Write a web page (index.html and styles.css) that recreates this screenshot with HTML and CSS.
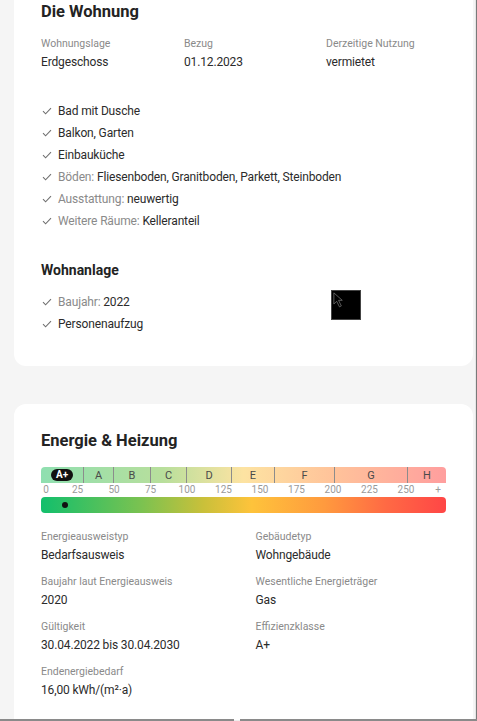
FILE: index.html
```html
<!DOCTYPE html>
<html lang="de">
<head>
<meta charset="utf-8">
<title>Die Wohnung</title>
<link rel="stylesheet" href="styles.css">
</head>
<body>
<div class="page">
  <section class="card card-top">
    <h2 class="title">Die Wohnung</h2>
    <div class="facts three">
      <div class="fact"><div class="label">Wohnungslage</div><div class="value">Erdgeschoss</div></div>
      <div class="fact"><div class="label">Bezug</div><div class="value">01.12.2023</div></div>
      <div class="fact"><div class="label">Derzeitige Nutzung</div><div class="value">vermietet</div></div>
    </div>
    <ul class="checks first">
      <li><svg class="tick" viewBox="0 0 10 8"><path d="M1 4.2 L3.6 6.8 L9 1.2"/></svg><span>Bad mit Dusche</span></li>
      <li><svg class="tick" viewBox="0 0 10 8"><path d="M1 4.2 L3.6 6.8 L9 1.2"/></svg><span>Balkon, Garten</span></li>
      <li><svg class="tick" viewBox="0 0 10 8"><path d="M1 4.2 L3.6 6.8 L9 1.2"/></svg><span>Einbauküche</span></li>
      <li><svg class="tick" viewBox="0 0 10 8"><path d="M1 4.2 L3.6 6.8 L9 1.2"/></svg><span><span class="muted">Böden:</span> Fliesenboden, Granitboden, Parkett, Steinboden</span></li>
      <li><svg class="tick" viewBox="0 0 10 8"><path d="M1 4.2 L3.6 6.8 L9 1.2"/></svg><span><span class="muted">Ausstattung:</span> neuwertig</span></li>
      <li><svg class="tick" viewBox="0 0 10 8"><path d="M1 4.2 L3.6 6.8 L9 1.2"/></svg><span><span class="muted">Weitere Räume:</span> Kelleranteil</span></li>
    </ul>
    <h3 class="subtitle">Wohnanlage</h3>
    <div class="anlage">
      <ul class="checks">
        <li><svg class="tick" viewBox="0 0 10 8"><path d="M1 4.2 L3.6 6.8 L9 1.2"/></svg><span><span class="muted">Baujahr:</span> 2022</span></li>
        <li><svg class="tick" viewBox="0 0 10 8"><path d="M1 4.2 L3.6 6.8 L9 1.2"/></svg><span>Personenaufzug</span></li>
      </ul>
      <div class="cursor-box"><svg viewBox="0 0 30 30" width="28" height="28"><path d="M2 2 L2 14 L5 11 L8 17 L10 16 L7 10 L11 10 Z" fill="none" stroke="#777" stroke-width="0.8"/></svg></div>
    </div>
  </section>

  <section class="card card-energy">
    <h2 class="title">Energie &amp; Heizung</h2>
    <div class="scale">
      <div class="classes">
        <div class="cls" style="width:43px"><span class="badge">A+</span></div>
        <div class="cls" style="width:30px">A</div>
        <div class="cls" style="width:37px">B</div>
        <div class="cls" style="width:36px">C</div>
        <div class="cls" style="width:45px">D</div>
        <div class="cls" style="width:43px">E</div>
        <div class="cls" style="width:60px">F</div>
        <div class="cls" style="width:73px">G</div>
        <div class="cls last">H</div>
      </div>
      <div class="ticks">
        <span class="num" style="left:5px">0</span>
        <span class="num" style="left:36.5px">25</span>
        <span class="num" style="left:73px">50</span>
        <span class="num" style="left:109.5px">75</span>
        <span class="num" style="left:146px">100</span>
        <span class="num" style="left:182.5px">125</span>
        <span class="num" style="left:219px">150</span>
        <span class="num" style="left:255.5px">175</span>
        <span class="num" style="left:292px">200</span>
        <span class="num" style="left:328.5px">225</span>
        <span class="num" style="left:365px">250</span>
        <span class="num" style="left:397px">+</span>
      </div>
      <div class="bar"><span class="dot" style="left:23.5px"></span></div>
    </div>
    <div class="facts two">
      <div class="fact"><div class="label">Energieausweistyp</div><div class="value">Bedarfsausweis</div></div>
      <div class="fact"><div class="label">Gebäudetyp</div><div class="value">Wohngebäude</div></div>
      <div class="fact"><div class="label">Baujahr laut Energieausweis</div><div class="value">2020</div></div>
      <div class="fact"><div class="label">Wesentliche Energieträger</div><div class="value">Gas</div></div>
      <div class="fact"><div class="label">Gültigkeit</div><div class="value">30.04.2022 bis 30.04.2030</div></div>
      <div class="fact"><div class="label">Effizienzklasse</div><div class="value">A+</div></div>
      <div class="fact"><div class="label">Endenergiebedarf</div><div class="value">16,00 kWh/(m²·a)</div></div>
    </div>
    <div class="next-block"></div>
  </section>
</div>
<div class="frame-right"></div>
<div class="frame-bottom"><span class="seg a"></span><span class="seg b"></span></div>
</body>
</html>
```

FILE: styles.css
```css
* { box-sizing: border-box; }
html, body { margin: 0; padding: 0; }
body {
  background: #f5f5f5;
  font-family: Roboto, "Noto Sans", sans-serif;
  color: #2b2b2b;
  overflow: hidden;
  height: 721px;
}
.page {
  padding: 0 4px 0 14px;
  display: flex;
  flex-direction: column;
  gap: 38px;
}
.card {
  background: #fff;
  border-radius: 12px;
  padding: 0 27px;
}
.card-top {
  border-radius: 0 0 12px 12px;
  padding-bottom: 31px;
}
.card-energy {
  padding-top: 25px;
  height: 340px;
  overflow: hidden;
}
.title {
  margin: 0;
  font-size: 16.5px;
  line-height: 24px;
  font-weight: 700;
  color: #232323;
}
.subtitle {
  margin: 28px 0 0;
  font-size: 14px;
  line-height: 20px;
  font-weight: 700;
  color: #232323;
}
.facts { display: grid; }
.facts.three { grid-template-columns: 143px 142px 1fr; margin-top: 12px; }
.facts.two { grid-template-columns: 1fr 1fr; column-gap: 24px; row-gap: 10px; margin-top: 16px; }
.label {
  font-size: 10.5px;
  line-height: 16px;
  color: #8a8a8a;
}
.value {
  margin-top: 1px;
  font-size: 12px;
  letter-spacing: -0.15px;
  line-height: 18px;
  color: #2b2b2b;
}
.checks {
  list-style: none;
  margin: 0;
  padding: 0;
}
.checks.first { margin-top: 29px; }
.anlage { margin-top: 11px; display: flex; justify-content: space-between; align-items: flex-start; }
.checks li {
  display: flex;
  align-items: center;
  height: 22px;
  font-size: 12px;
  letter-spacing: -0.15px;
  color: #2b2b2b;
}
.tick {
  width: 10px;
  height: 8px;
  margin: 0 6px 0 1px;
  fill: none;
  stroke: #707070;
  stroke-width: 1.1;
}
.muted { color: #8a8a8a; }
.cursor-box {
  width: 30px;
  height: 30px;
  background: #000;
  margin: 0 85px 0 0;
  position: relative;
  top: -1px;
  border: 1px solid #444;
}
.cursor-box svg { display: block; }

.scale { margin-top: 14px; width: 405px; }
.classes {
  display: flex;
  height: 16px;
  border-radius: 4px 4px 0 0;
  overflow: hidden;
  background: linear-gradient(90deg, #8fdfb0 0%, #b8df9c 30%, #fde3a2 50%, #ffc39a 72%, #ff9e9e 100%);
}
.cls {
  flex: none;
  display: flex;
  align-items: center;
  justify-content: center;
  font-size: 11px;
  color: #4a4a4a;
  border-right: 1px solid #8c8c8c;
}
.cls.last { flex: 1; border-right: none; }
.badge {
  background: #111;
  color: #fff;
  font-weight: 700;
  font-size: 10px;
  line-height: 12px;
  padding: 0 5px;
  border-radius: 7px;
}
.ticks {
  position: relative;
  height: 14px;
}
.num {
  position: absolute;
  top: 0;
  transform: translateX(-50%);
  font-size: 10px;
  line-height: 14px;
  color: #9a9a9a;
}
.bar {
  position: relative;
  height: 16px;
  border-radius: 4px;
  background: linear-gradient(90deg, #12bf6c 0%, #7cc250 25%, #c9c03a 40%, #fec33b 52%, #ff9a3e 70%, #ff6a44 85%, #ff4646 100%);
}
.dot {
  position: absolute;
  top: 5px;
  width: 6px;
  height: 6px;
  margin-left: -3px;
  border-radius: 50%;
  background: #111;
}
.next-block {
  margin-top: 21px;
  height: 10px;
  border-top: 1px solid #eee;
  margin-left: 4px;
  margin-right: 6px;
}
.frame-right {
  position: fixed;
  top: 0;
  right: 0;
  width: 2px;
  height: 721px;
  border-left: 1px solid #e6e6e6;
  background: #7a7a7a;
}
.frame-bottom {
  position: fixed;
  left: 0;
  bottom: 0;
  width: 477px;
  height: 2px;
  display: flex;
  gap: 6px;
}
.frame-bottom .seg { height: 2px; background: #8a8a8a; }
.frame-bottom .a { width: 234px; }
.frame-bottom .b { flex: 1; }
```
